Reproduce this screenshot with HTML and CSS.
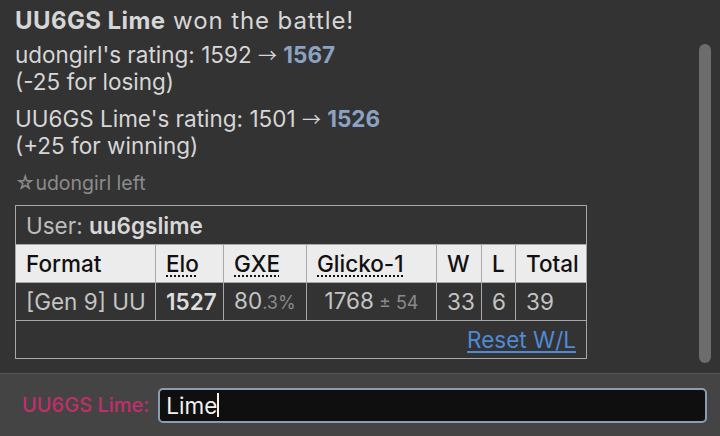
FILE: index.html
```html
<!DOCTYPE html>
<html>
<head>
<meta charset="utf-8">
<link rel="stylesheet" href="styles.css">
</head>
<body>
<div class="app">
  <div class="log">
    <div class="title"><strong>UU6GS Lime</strong> won the battle!</div>
    <div class="para p1">udongirl's rating: 1592 <span class="arrow">→</span> <strong class="num">1567</strong><br>(-25 for losing)</div>
    <div class="para p2">UU6GS Lime's rating: 1501 <span class="arrow">→</span> <strong class="num">1526</strong><br>(+25 for winning)</div>
    <div class="notice">☆udongirl left</div>
    <table class="stats">
      <colgroup>
        <col class="c-format"><col class="c-elo"><col class="c-gxe"><col class="c-gl"><col class="c-w"><col class="c-l"><col class="c-t">
      </colgroup>
      <tr class="cap"><td colspan="7">User: <strong>uu6gslime</strong></td></tr>
      <tr class="head">
        <th>Format</th>
        <th><abbr>Elo</abbr></th>
        <th><abbr>GXE</abbr></th>
        <th><abbr>Glicko-1</abbr></th>
        <th>W</th>
        <th>L</th>
        <th>Total</th>
      </tr>
      <tr class="data">
        <td>[Gen 9] UU</td>
        <td><strong>1527</strong></td>
        <td>80<small>.3%</small></td>
        <td class="center">1768<small> ± 54</small></td>
        <td>33</td>
        <td>6</td>
        <td>39</td>
      </tr>
      <tr class="foot"><td colspan="7"><a href="#">Reset W/L</a></td></tr>
    </table>
    <div class="thumb"></div>
  </div>
  <div class="bar">
    <label class="who">UU6GS Lime:</label>
    <div class="input">Lime<span class="caret"></span></div>
  </div>
</div>
</body>
</html>
```

FILE: styles.css
```css
html, body {
  margin: 0;
  padding: 0;
  background: #333333;
}
.app {
  width: 720px;
  height: 436px;
  display: flex;
  flex-direction: column;
  font-family: Inter, "Noto Sans", sans-serif;
  color: #d6d6d6;
  overflow: hidden;
}
.log {
  position: relative;
  height: 373px;
  box-sizing: border-box;
  padding: 6px 0 0 15px;
  font-size: 22.5px;
  line-height: 27px;
}
.title {
  font-size: 24px;
  line-height: 30px;
  letter-spacing: 0.9px;
}
.title strong { font-weight: 700; letter-spacing: 0.4px; }
.p1 { margin-top: 5px; }
.p2 { margin-top: 10px; }
.arrow {
  font-family: "Noto Sans CJK JP", sans-serif;
  font-size: 19px;
}
.num {
  color: #8ca2c2;
  font-weight: 700;
}
.notice {
  color: #8c8c8c;
  font-size: 19.5px;
  line-height: 24px;
  margin-top: 12px;
  margin-bottom: 10px;
}
.stats {
  border-collapse: collapse;
  table-layout: fixed;
  width: 571px;
  font-size: 22.5px;
}
.stats td, .stats th {
  border: 1px solid #a8a8a8;
  padding: 0 10px;
  height: 37px;
  text-align: left;
  white-space: nowrap;
}
.stats tr.cap td {
  color: #bdbdbd;
  height: 38px;
}
.stats tr.cap td strong { color: #d8d8d8; font-weight: 600; }
.stats th {
  background: #ececec;
  color: #111;
  font-weight: 500;
}
.stats abbr {
  text-decoration: underline dotted;
  text-underline-offset: 3px;
  text-decoration-thickness: 2px;
}
.c-format { width: 140px; }
.c-elo { width: 68px; }
.c-gxe { width: 83px; }
.c-gl { width: 130px; }
.c-w { width: 45px; }
.c-l { width: 34px; }
.c-t { width: 71px; }
.stats td { color: #c4c4c4; }
.stats td strong { color: #dedede; font-weight: 600; }
.stats td small {
  font-size: 18px;
  color: #8a8a8a;
}
.stats td.center { text-align: center; padding: 0; }
.stats tr.foot td {
  text-align: right;
}
.stats tr.foot a {
  color: #4f8ad6;
  text-decoration: underline;
  text-underline-offset: 3px;
}
.thumb {
  position: absolute;
  right: 9px;
  top: 44px;
  width: 12px;
  height: 319px;
  border-radius: 6px;
  background: #6c6c6c;
}
.bar {
  flex: 1;
  background: #444444;
  border-top: 1px solid #565656;
  display: flex;
  align-items: center;
  padding: 0 13px 0 22px;
  gap: 9px;
}
.who {
  color: #c22e6b;
  font-size: 20px;
  font-weight: 500;
}
.input {
  flex: 1;
  height: 31px;
  box-sizing: content-box;
  background: #0f0f0f;
  border: 2px solid #8b9eb0;
  border-radius: 5px;
  color: #f2f2f2;
  font-size: 22.5px;
  line-height: 31px;
  padding-left: 6px;
  display: flex;
  align-items: center;
}
.caret {
  display: inline-block;
  width: 2px;
  height: 24px;
  background: #f2f2f2;
}
```
